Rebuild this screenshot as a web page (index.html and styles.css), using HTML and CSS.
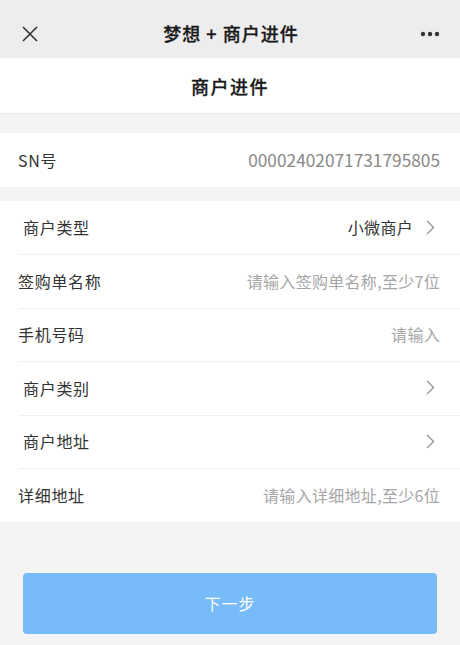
FILE: index.html
```html
<!DOCTYPE html>
<html lang="zh-CN">
<head>
<meta charset="utf-8">
<title>商户进件</title>
<link rel="stylesheet" href="styles.css">
</head>
<body>
<div class="topbar">
  <span class="tb-icon tb-close">
    <svg width="16" height="16" viewBox="0 0 16 16"><path d="M1 1L15 15M15 1L1 15" stroke="#333" stroke-width="1.6" fill="none"/></svg>
  </span>
  <div class="tb-title">梦想 + 商户进件</div>
  <span class="tb-icon tb-more">
    <svg width="20" height="6" viewBox="0 0 20 6"><circle cx="3" cy="3" r="2.2" fill="#333"/><circle cx="10" cy="3" r="2.2" fill="#333"/><circle cx="17" cy="3" r="2.2" fill="#333"/></svg>
  </span>
</div>
<div class="header">商户进件</div>
<div class="gap gap-top"></div>
<div class="group">
  <div class="row"><span class="label">SN号</span><span class="value sn">00002402071731795805</span></div>
</div>
<div class="gap gap-mid"></div>
<div class="group">
  <div class="row pick"><span class="label">商户类型</span><span class="value dark">小微商户</span><svg class="chev" width="9" height="15" viewBox="0 0 9 15"><path d="M1 1L7.6 7.5L1 14" stroke="#999" stroke-width="1.4" fill="none"/></svg></div>
  <div class="row"><span class="label">签购单名称</span><span class="value ph">请输入签购单名称,至少7位</span></div>
  <div class="row"><span class="label">手机号码</span><span class="value ph">请输入</span></div>
  <div class="row pick"><span class="label">商户类别</span><span class="value"></span><svg class="chev" width="9" height="15" viewBox="0 0 9 15"><path d="M1 1L7.6 7.5L1 14" stroke="#999" stroke-width="1.4" fill="none"/></svg></div>
  <div class="row pick"><span class="label">商户地址</span><span class="value"></span><svg class="chev" width="9" height="15" viewBox="0 0 9 15"><path d="M1 1L7.6 7.5L1 14" stroke="#999" stroke-width="1.4" fill="none"/></svg></div>
  <div class="row"><span class="label">详细地址</span><span class="value ph">请输入详细地址,至少6位</span></div>
</div>
<div class="actions">
  <button class="btn">下一步</button>
</div>
</body>
</html>
```
FILE: styles.css
```css
html, body {
  margin: 0;
  padding: 0;
  background: #f4f4f4;
  font-family: "Noto Sans CJK SC", "Noto Sans", sans-serif;
  color: #333;
}
.topbar {
  height: 58px;
  background: #ededed;
  display: flex;
  align-items: center;
  justify-content: space-between;
  padding: 0 20px 0 22px;
  box-sizing: border-box;
}
.tb-icon { display: flex; width: 20px; justify-content: flex-start; }
.tb-close { padding-top: 9px; }
.tb-more { padding-top: 10px; justify-content: flex-end; }
.tb-title {
  font-size: 18px;
  font-weight: 500;
  -webkit-text-stroke: 0.3px #1a1a1a;
  letter-spacing: 1px;
  line-height: 24px;
  padding-top: 8px;
  color: #1a1a1a;
}
.header {
  height: 55px;
  background: #fff;
  border-bottom: 1px solid #ececec;
  display: flex;
  align-items: center;
  justify-content: center;
  font-size: 18px;
  font-weight: 500;
  -webkit-text-stroke: 0.3px #1a1a1a;
  letter-spacing: 1.5px;
  color: #1a1a1a;
}
.gap-top { height: 19px; }
.gap-mid { height: 14px; }
.group { background: #fff; }
.row {
  height: 53.5px;
  display: flex;
  align-items: center;
  padding: 0 20px 0 18px;
  box-sizing: border-box;
  position: relative;
  font-size: 16px;
  line-height: 22px;
}
.row + .row::before {
  content: "";
  position: absolute;
  top: 0;
  left: 18px;
  right: 0;
  border-top: 1px solid #efefef;
}
.row.pick { padding-left: 23px; padding-right: 25px; }
.label { color: #333; flex: none; letter-spacing: 0.7px; }
.value { margin-left: auto; color: #999; }
.value.sn { color: #888; font-size: 17.3px; }
.value.ph { color: #a6a6a6; letter-spacing: 0.3px; }
.value.dark { color: #333; letter-spacing: 0.3px; }
.chev {
  margin-left: 13px;
  flex: none;
  display: block;
}
.actions {
  padding: 51px 23px 0;
}
.btn {
  display: block;
  width: 100%;
  height: 61px;
  border: 0;
  border-radius: 4px;
  background: #77bbf9;
  color: #fff;
  font-family: inherit;
  font-size: 16px;
  letter-spacing: 1px;
}
```
